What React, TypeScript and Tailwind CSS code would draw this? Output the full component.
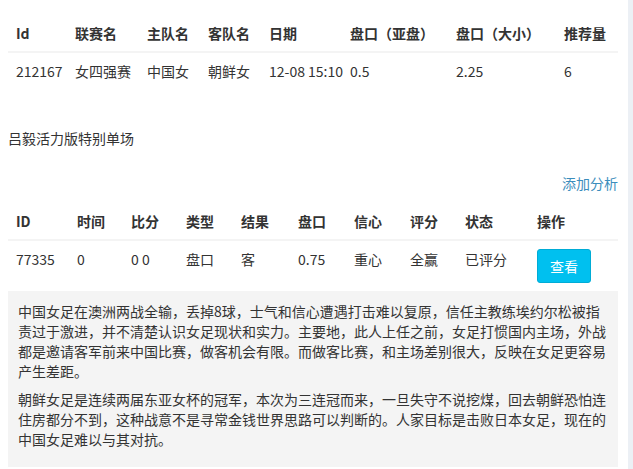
const matchCols = [
  { label: "Id", w: "w-[59px]" },
  { label: "联赛名", w: "w-[72px]" },
  { label: "主队名", w: "w-[61px]" },
  { label: "客队名", w: "w-[61px]" },
  { label: "日期", w: "w-[81px]" },
  { label: "盘口（亚盘）", w: "w-[106px]" },
  { label: "盘口（大小）", w: "w-[108px]" },
  { label: "推荐量", w: "w-[62px]" },
];

const matchRow = ["212167", "女四强赛", "中国女", "朝鲜女", "12-08 15:10", "0.5", "2.25", "6"];

const analysisCols = [
  { label: "ID", w: "w-[61px]" },
  { label: "时间", w: "w-[54px]" },
  { label: "比分", w: "w-[55px]" },
  { label: "类型", w: "w-[55px]" },
  { label: "结果", w: "w-[57px]" },
  { label: "盘口", w: "w-[56px]" },
  { label: "信心", w: "w-[56px]" },
  { label: "评分", w: "w-[55px]" },
  { label: "状态", w: "w-[72px]" },
  { label: "操作", w: "w-[89px]" },
];

const analysisRow = ["77335", "0", "0 0", "盘口", "客", "0.75", "重心", "全赢", "已评分"];

export default function App() {
  return (
    <div className="flex h-[469px] overflow-hidden bg-white font-['Noto_Sans_CJK_SC',sans-serif] text-[14px] text-[#333]">
      {/* Main box */}
      <div className="w-[628px] shrink-0 pl-2 pr-[10px] pt-[15px]">
        <table className="w-full table-fixed border-collapse">
          <thead>
            <tr>
              {matchCols.map((c) => (
                <th key={c.label} className={`${c.w} border-b-2 border-[#f4f4f4] px-2 py-2 text-left font-bold leading-5 whitespace-nowrap`}>
                  {c.label}
                </th>
              ))}
            </tr>
          </thead>
          <tbody>
            <tr>
              {matchRow.map((v, i) => (
                <td key={i} className="px-2 py-2 align-top leading-5 whitespace-nowrap">
                  {v}
                </td>
              ))}
            </tr>
          </tbody>
        </table>

        <div className="mt-[39px] leading-5">吕毅活力版特别单场</div>

        <div className="mt-[25px] flex justify-end leading-5">
          <a href="#" className="text-[#3c8dbc]">添加分析</a>
        </div>

        <table className="mt-[10px] w-full table-fixed border-collapse">
          <thead>
            <tr>
              {analysisCols.map((c) => (
                <th key={c.label} className={`${c.w} border-b-2 border-[#f4f4f4] px-2 py-2 text-left font-bold leading-5 whitespace-nowrap`}>
                  {c.label}
                </th>
              ))}
            </tr>
          </thead>
          <tbody>
            <tr>
              {analysisRow.map((v, i) => (
                <td key={i} className="px-2 py-2 align-top leading-5 whitespace-nowrap">
                  {v}
                </td>
              ))}
              <td className="px-2 py-2 align-top">
                <button className="rounded-[3px] border border-[#00acd6] bg-[#00c0ef] px-3 py-[6px] leading-5 text-white">
                  查看
                </button>
              </td>
            </tr>
          </tbody>
        </table>

        {/* Analysis text */}
        <div className="bg-[#f4f4f4] pl-[10px] pr-[6px] pt-[10px] pb-[10px] leading-5">
          <p className="mb-2 whitespace-nowrap">
            中国女足在澳洲两战全输，丢掉8球，士气和信心遭遇打击难以复原，信任主教练埃约尔松被指
            <br />
            责过于激进，并不清楚认识女足现状和实力。主要地，此人上任之前，女足打惯国内主场，外战
            <br />
            都是邀请客军前来中国比赛，做客机会有限。而做客比赛，和主场差别很大，反映在女足更容易
            <br />
            产生差距。
          </p>
          <p className="mb-2 whitespace-nowrap">
            朝鲜女足是连续两届东亚女杯的冠军，本次为三连冠而来，一旦失守不说挖煤，回去朝鲜恐怕连
            <br />
            住房都分不到，这种战意不是寻常金钱世界思路可以判断的。人家目标是击败日本女足，现在的
            <br />
            中国女足难以与其对抗。
          </p>
        </div>
      </div>

      {/* Right page background strip */}
      <div className="flex-1 bg-[#ecf0f5]" />
    </div>
  );
}
